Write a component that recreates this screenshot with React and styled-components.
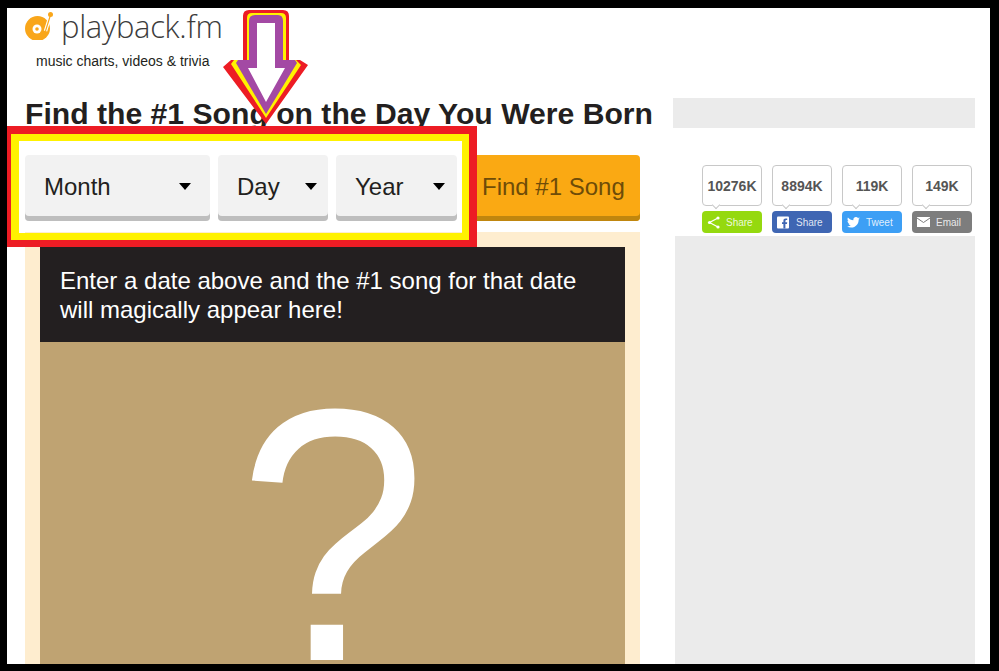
import styled, { createGlobalStyle } from 'styled-components';

const GlobalStyle = createGlobalStyle`
  html, body {
    margin: 0;
    padding: 0;
    background: #000;
  }
  * {
    box-sizing: border-box;
  }
`;

const shares = [
  { count: '10276K', label: 'Share', color: '#95d90f', icon: 'share' },
  { count: '8894K', label: 'Share', color: '#3f66b3', icon: 'facebook' },
  { count: '119K', label: 'Tweet', color: '#3d9ff5', icon: 'twitter' },
  { count: '149K', label: 'Email', color: '#7d7d7d', icon: 'email' },
];

const ShareIcon = ({ type }) => {
  if (type === 'share') {
    return (
      <svg width="13" height="13" viewBox="0 0 13 13">
        <path d="M11 2 L2.5 6.5 L11 11" fill="none" stroke="#fff" strokeWidth="1.2" />
        <circle cx="11" cy="2" r="1.6" fill="#fff" />
        <circle cx="2.5" cy="6.5" r="1.6" fill="#fff" />
        <circle cx="11" cy="11" r="1.6" fill="#fff" />
      </svg>
    );
  }
  if (type === 'facebook') {
    return (
      <svg width="13" height="13" viewBox="0 0 13 13">
        <rect width="12" height="12" y="0.5" rx="1" fill="#fff" />
        <path d="M8.4 12.5 V8 H10 L10.2 6.2 H8.4 V5 C8.4 4.4 8.7 4.1 9.3 4.1 H10.2 V2.5 H8.8 C7.2 2.5 6.4 3.4 6.4 4.8 V6.2 H5 V8 H6.4 V12.5 Z" fill="#3f66b3" />
      </svg>
    );
  }
  if (type === 'twitter') {
    return (
      <svg width="13" height="11" viewBox="0 0 24 20">
        <path d="M24 2.4c-.9.4-1.8.7-2.8.8 1-.6 1.8-1.6 2.2-2.7-1 .6-2 1-3.1 1.2C19.3.7 18 0 16.6 0c-2.7 0-4.9 2.2-4.9 4.9 0 .4 0 .8.1 1.1C7.7 5.8 4.1 3.9 1.7.9c-.4.7-.7 1.6-.7 2.5 0 1.7.9 3.2 2.2 4.1-.8 0-1.6-.2-2.2-.6v.1c0 2.4 1.7 4.4 3.9 4.8-.4.1-.8.2-1.3.2-.3 0-.6 0-.9-.1.6 2 2.4 3.4 4.6 3.4-1.7 1.3-3.8 2.1-6.1 2.1-.4 0-.8 0-1.2-.1C2.2 18.4 4.8 19.2 7.5 19.2c9.1 0 14-7.5 14-14v-.6c1-.7 1.8-1.5 2.5-2.2z" fill="#fff" />
      </svg>
    );
  }
  return (
    <svg width="13" height="10" viewBox="0 0 13 10">
      <rect width="13" height="10" fill="#fff" />
      <path d="M0 1 L6.5 5.5 L13 1" fill="none" stroke="#7d7d7d" strokeWidth="1" />
    </svg>
  );
};

const App = () => {
  return (
    <>
      <GlobalStyle />
      <Frame>
        <Page>
          <LogoRow>
            <LogoMark viewBox="0 0 28 28" aria-hidden="true">
              <circle cx="12.5" cy="16.5" r="12.5" fill="#f9a61a" />
              <circle cx="12" cy="17" r="4.5" fill="#fff" />
              <circle cx="12" cy="17" r="1.8" fill="#f9a61a" />
              <path d="M25.5 3 L20.5 19" stroke="#fff" strokeWidth="3.5" />
              <path d="M25.5 3 L20.5 19" stroke="#f9a61a" strokeWidth="1.2" />
              <circle cx="25.5" cy="2.5" r="2.5" fill="#f9a61a" />
            </LogoMark>
            <LogoText>playback.fm</LogoText>
          </LogoRow>
          <Tagline>music charts, videos &amp; trivia</Tagline>
          <Columns>
            <MainColumn>
              <Title>Find the #1 Song on the Day You Were Born</Title>
              <DateForm>
                <Select $width={185} $caretRight={19}>
                  Month
                  <Caret />
                </Select>
                <Select $width={110} $caretRight={11}>
                  Day
                  <Caret />
                </Select>
                <Select $width={121} $caretRight={12}>
                  Year
                  <Caret />
                </Select>
                <FindButton>Find #1 Song</FindButton>
              </DateForm>
              <SongCard>
                <SongHeader>
                  Enter a date above and the #1 song for that date will magically appear here!
                </SongHeader>
                <SongArt>
                  <QuestionMark>?</QuestionMark>
                </SongArt>
              </SongCard>
            </MainColumn>
            <SideColumn>
              <AdTop />
              <ShareRow>
                {shares.map((item) => (
                  <ShareItem key={item.color}>
                    <CountBubble>{item.count}</CountBubble>
                    <ShareButton $color={item.color}>
                      <ShareIcon type={item.icon} />
                      {item.label}
                    </ShareButton>
                  </ShareItem>
                ))}
              </ShareRow>
              <AdSide />
            </SideColumn>
          </Columns>
        </Page>

        {/* annotations drawn over the screenshot */}
        <HighlightBox />
        <ArrowMark viewBox="223 10 86 115" aria-hidden="true">
          <path d="M243 16 Q243 10 249 10 H283 Q289 10 289 16 V60 H300 L308 65 L266 124 L223 67 L231 60 H243 Z" fill="#ed1c24" />
          <path d="M247 18 Q247 13 252 13 H281 Q286 13 286 18 V60 H296 L301 65 L266 118 L231 64 L234 60 H247 Z" fill="#fff200" />
          <path d="M249 21 Q249 15 255 15 H278 Q283 15 283 21 V60 H295 L297 63 L266 114 L236 63 L238 60 H249 Z" fill="#a349a4" />
          <path d="M257 23 H275 V68 H285 L266 102 L248 68 H257 Z" fill="#fff" />
        </ArrowMark>
      </Frame>
    </>
  );
};

export default App;

const Frame = styled.div`
  position: relative;
  width: 999px;
  height: 671px;
  overflow: hidden;
  background: #000;
  padding: 8px 9px 7px 7px;
`;

const Page = styled.div`
  height: 100%;
  overflow: hidden;
  background: #fff;
  padding: 0 15px 0 18px;
  font-family: 'Liberation Sans', Arial, sans-serif;
  color: #231f20;
`;

const LogoRow = styled.div`
  display: flex;
  align-items: center;
  gap: 8px;
  height: 36px;
`;

const LogoMark = styled.svg`
  width: 28px;
  height: 28px;
  flex: none;
`;

const LogoText = styled.span`
  font-family: 'Open Sans', sans-serif;
  font-weight: 300;
  font-size: 31px;
  line-height: 36px;
  color: #3c3c3c;
  letter-spacing: -0.3px;
`;

const Tagline = styled.div`
  font-size: 14px;
  line-height: 16px;
  margin: 9px 0 0 11px;
  color: #231f20;
`;

const Columns = styled.div`
  display: flex;
  margin-top: 29px;
`;

const MainColumn = styled.div`
  width: 615px;
  flex: none;
`;

const Title = styled.h1`
  margin: -1px 0 0;
  font-size: 30.15px;
  line-height: 34px;
  font-weight: 700;
  white-space: nowrap;
  color: #231f20;
`;

const DateForm = styled.div`
  display: flex;
  gap: 8px;
  margin-top: 24px;
`;

const Select = styled.div`
  position: relative;
  width: ${(props) => props.$width}px;
  height: 66px;
  padding: 0 0 3px 19px;
  display: flex;
  align-items: center;
  background: #f2f2f2;
  box-shadow: inset 0 -5px 0 #bebebe;
  border-radius: 4px;
  font-size: 24px;
  color: #231f20;

  span {
    right: ${(props) => props.$caretRight}px;
  }
`;

const Caret = styled.span`
  position: absolute;
  top: 28px;
  border-left: 6px solid transparent;
  border-right: 6px solid transparent;
  border-top: 7px solid #000;
`;

const FindButton = styled.div`
  flex: 1;
  height: 66px;
  padding: 0 0 3px 17px;
  display: flex;
  align-items: center;
  background: #faa913;
  box-shadow: inset 0 -5px 0 #c0860e;
  border-radius: 4px;
  font-size: 24px;
  white-space: nowrap;
  color: #6e4c08;
`;

const SongCard = styled.div`
  margin-top: 11px;
  height: 600px;
  padding: 15px;
  background: #feedcf;
`;

const SongHeader = styled.div`
  height: 95px;
  padding: 19px 20px 0;
  background: #231f20;
  color: #fff;
  font-size: 24px;
  line-height: 29px;
`;

const SongArt = styled.div`
  height: 480px;
  padding-top: 43px;
  background: #bfa372;
  color: #fff;
  text-align: center;
`;

const QuestionMark = styled.span`
  display: inline-block;
  font-size: 340px;
  line-height: 300px;
  transform: scaleY(1.06);
`;

const SideColumn = styled.div`
  flex: 1;
  margin-left: 33px;
  min-width: 0;
`;

const AdTop = styled.div`
  height: 30px;
  background: #ebebeb;
`;

const ShareRow = styled.div`
  display: flex;
  gap: 10px;
  margin: 37px 0 0 29px;
`;

const ShareItem = styled.div`
  width: 60px;
`;

const CountBubble = styled.div`
  position: relative;
  height: 41px;
  border: 1px solid #c8c8c8;
  border-radius: 4px;
  background: #fff;
  display: flex;
  align-items: center;
  justify-content: center;
  font-size: 14px;
  font-weight: 700;
  color: #555;

  &::after {
    content: '';
    position: absolute;
    left: 10px;
    bottom: -3px;
    width: 5px;
    height: 5px;
    background: #fff;
    border-right: 1px solid #c8c8c8;
    border-bottom: 1px solid #c8c8c8;
    transform: rotate(45deg);
  }
`;

const ShareButton = styled.div`
  margin-top: 5px;
  height: 22px;
  padding-left: 5px;
  border-radius: 4px;
  background: ${(props) => props.$color};
  color: rgba(255, 255, 255, 0.85);
  font-size: 10px;
  display: flex;
  align-items: center;
  gap: 6px;
`;

const AdSide = styled.div`
  margin: 3px 0 0 2px;
  height: 500px;
  background: #ebebeb;
`;

const HighlightBox = styled.div`
  position: absolute;
  left: 7px;
  top: 126px;
  width: 470px;
  height: 121px;
  border: solid #ed1c24;
  border-width: 8px 8px 7px 4px;
  box-shadow: inset 0 0 0 7px #fff200, inset 8px 0 0 #fff200;
  pointer-events: none;
`;

const ArrowMark = styled.svg`
  position: absolute;
  left: 223px;
  top: 10px;
  width: 86px;
  height: 115px;
`;
